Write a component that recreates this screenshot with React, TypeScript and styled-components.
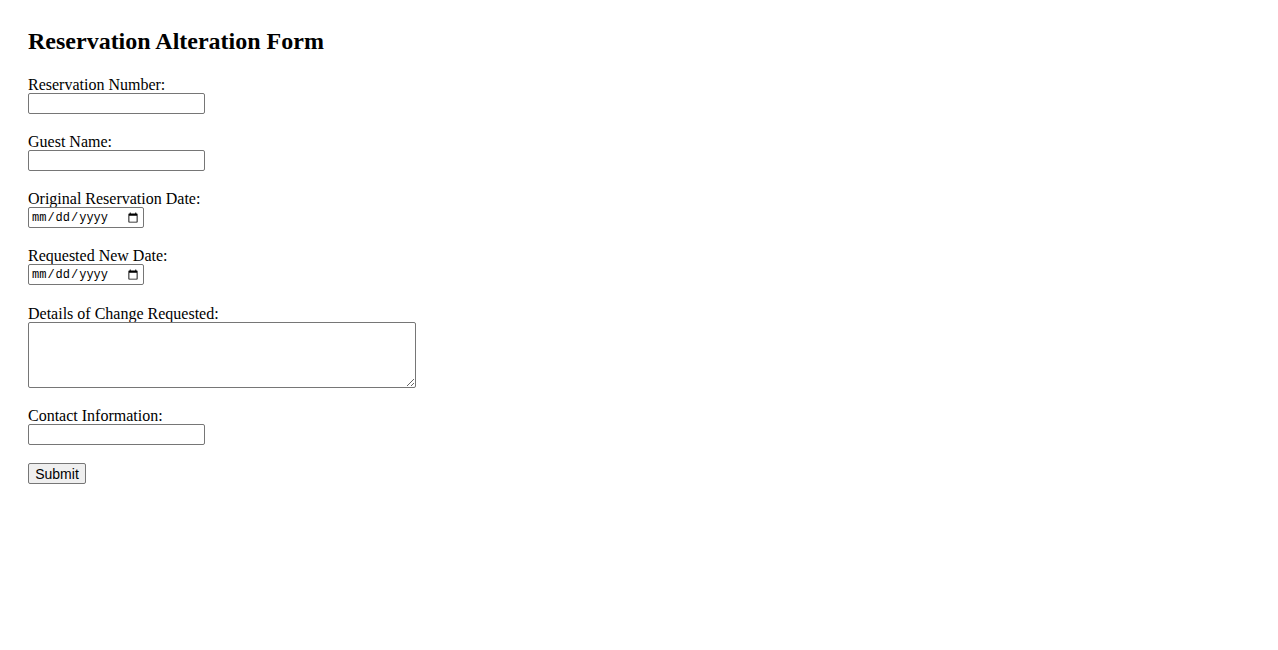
import React from "react";
import styled, { createGlobalStyle } from "styled-components";

const GlobalStyle = createGlobalStyle`
  body {
    margin: 8px;
    background: #fff;
    color: #000;
    font-family: "Liberation Serif", "Times New Roman", serif;
    font-size: 16px;
  }
`;

const Page = styled.div`
  padding: 20px;
`;

const Title = styled.h2`
  margin: 0 0 21px;
  font-size: 24px;
  font-weight: bold;
  line-height: 26px;
`;

const Form = styled.form`
  display: flex;
  flex-direction: column;
  align-items: flex-start;
  gap: 18px;
`;

const Field = styled.div<{ $shift?: number }>`
  display: flex;
  flex-direction: column;
  align-items: flex-start;
  margin-top: ${(p) => p.$shift ?? 0}px;
`;

const Label = styled.label`
  display: block;
  padding-top: 1px;
  line-height: 17px;
`;

const TextInput = styled.input`
  box-sizing: border-box;
  width: 177px;
  height: 21px;
  margin: 0;
  padding: 1px 2px;
  border: 1px solid #767676;
  border-radius: 2px;
  font-family: "Liberation Sans", Arial, sans-serif;
  font-size: 13.33px;
`;

const DateInput = styled.input`
  box-sizing: border-box;
  width: 116px;
  height: 21px;
  margin: 0;
  padding: 1px 2px;
  border: 1px solid #767676;
  border-radius: 2px;
  font-family: "Liberation Mono", "DejaVu Sans Mono", monospace;
  font-size: 12px;
  color: #000;
`;

const TextArea = styled.textarea`
  box-sizing: border-box;
  width: 388px;
  height: 66px;
  margin: 0;
  padding: 2px;
  border: 1px solid #767676;
  border-radius: 2px;
  font-family: "Liberation Mono", monospace;
  font-size: 13.33px;
`;

const SubmitButton = styled.button`
  box-sizing: border-box;
  width: 58px;
  height: 21px;
  margin: 0;
  padding: 1px 6px;
  border: 1px solid #767676;
  border-radius: 2px;
  background: #efefef;
  color: #000;
  font-family: "Liberation Sans", Arial, sans-serif;
  font-size: 14px;
  cursor: pointer;
`;

export default function App() {
  return (
    <>
      <GlobalStyle />
      <Page>
        <Title>Reservation Alteration Form</Title>
        <Form onSubmit={(e) => e.preventDefault()}>
          <Field>
            <Label htmlFor="resNumber">Reservation Number:</Label>
            <TextInput type="text" id="resNumber" />
          </Field>
          <Field>
            <Label htmlFor="guestName">Guest Name:</Label>
            <TextInput type="text" id="guestName" />
          </Field>
          <Field>
            <Label htmlFor="originalDate">Original Reservation Date:</Label>
            <DateInput type="date" id="originalDate" />
          </Field>
          <Field>
            <Label htmlFor="newDate">Requested New Date:</Label>
            <DateInput type="date" id="newDate" />
          </Field>
          <Field $shift={1}>
            <Label htmlFor="details">Details of Change Requested:</Label>
            <TextArea id="details" />
          </Field>
          <Field>
            <Label htmlFor="contact">Contact Information:</Label>
            <TextInput type="text" id="contact" />
          </Field>
          <SubmitButton type="submit">Submit</SubmitButton>
        </Form>
      </Page>
    </>
  );
}
